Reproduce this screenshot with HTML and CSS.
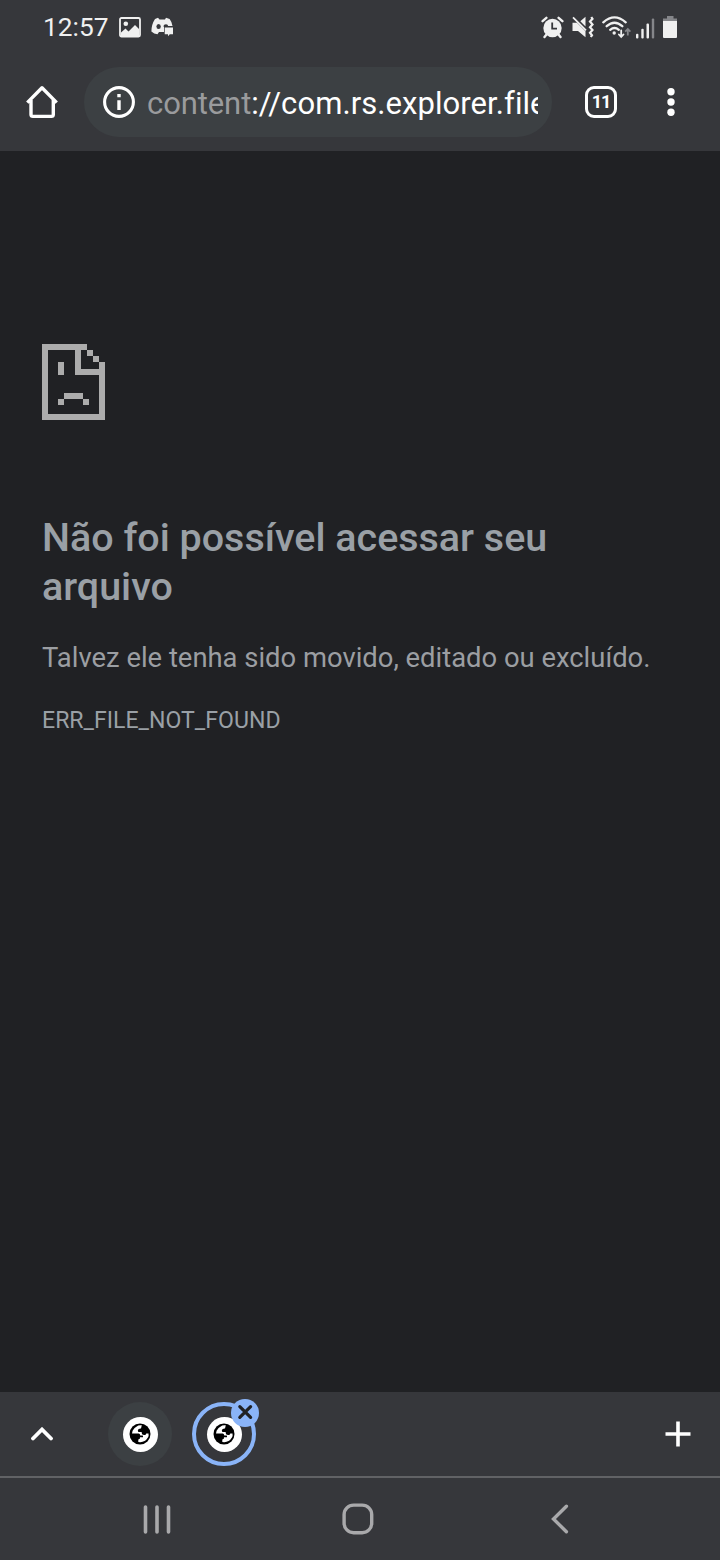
FILE: index.html
```html
<!doctype html>
<html lang="pt-BR">

<head>
    <meta charset="UTF-8" />
    <meta name="viewport" content="width=device-width, initial-scale=1.0" />
    <title>Não foi possível acessar seu arquivo</title>
    <link rel="stylesheet" href="styles.css">
</head>

<body>
    <div class="status-bar">
        <span class="clock">12:57</span>
        <svg class="icon-image" width="22" height="21" viewBox="0 0 22 21">
            <rect x="1" y="1" width="20" height="18.5" rx="1.5" fill="none" stroke="#f0f0f0" stroke-width="1.8" />
            <circle cx="6.8" cy="6.8" r="2.3" fill="#f0f0f0" />
            <path d="M2 15.5 6.5 11.5 9.5 14.5 16 8 20 12V19H2Z" fill="#f0f0f0" />
        </svg>
        <svg class="icon-discord" width="23" height="20" viewBox="0 0 23 20">
            <path d="M7 .8 4 2Q.4 7.5.4 14.5 3 17 6.5 17.2L8 15H13V9H21.5Q21 5 18.6 2L15 .8 14 2.5H8.5Z" fill="#f0f0f0" />
            <ellipse cx="7.6" cy="9.6" rx="2.2" ry="2.5" fill="#36373b" />
            <path d="M12.2 9.5Q12.8 7.2 15 7.2 17 7.2 17.3 9.5Z" fill="#36373b" />
            <path d="M13.7 10.5H22V17.2H18.8L17 19.3V17.2H13.7Z" fill="#f0f0f0" />
        </svg>
        <div class="status-icons">
            <svg width="23" height="23" viewBox="0 0 23 23">
                <g fill="none" stroke="#f0f0f0" stroke-width="2.4" stroke-linecap="round">
                    <path d="M1.6 5.2 5.4 1.8M21.4 5.2 17.6 1.8M5.5 18.5 3.5 21M17.5 18.5 19.5 21" />
                </g>
                <circle cx="11.5" cy="12" r="9.2" fill="#f0f0f0" />
                <path d="M11.2 6.5V12.6H16" fill="none" stroke="#36373b" stroke-width="1.8" />
            </svg>
            <svg class="icon-mute" width="22" height="22" viewBox="0 0 22 22">
                <path d="M.5 6.8H5L13.5 15.2V21.3L6 15H.5ZM8.3 5.3 13.5.8V10.4Z" fill="#f0f0f0" />
                <path d="M1 1.3 14 14.3" stroke="#f0f0f0" stroke-width="1.8" />
                <path d="M19.3 1 20.5 2.8 18 5.6 20.5 8.4 18 11.2 20.5 14 18 16.8 20 19.2 18.8 21" fill="none" stroke="#f0f0f0" stroke-width="2.2" />
            </svg>
            <svg class="icon-wifi" width="29" height="23" viewBox="0 0 29 23">
                <g fill="none" stroke="#f0f0f0" stroke-width="2.3" stroke-linecap="round">
                    <path d="M1.3 6.3Q12.5-3.6 23.7 6.3M4.7 10.2Q12.5 3.3 20.3 10.2M8.2 13.8Q12.5 10.2 16.8 13.8" />
                    <path d="M19.2 14.3V20.7M16.9 18.5 19.2 20.9 21.5 18.5" stroke-width="1.8" />
                </g>
                <circle cx="12.2" cy="17" r="1.7" fill="#f0f0f0" />
                <path d="M25.8 19.5V13.5M23.2 15.7 25.8 13 28.4 15.7" fill="none" stroke="#85868a" stroke-width="1.8" />
            </svg>
            <svg class="icon-signal" width="19" height="21" viewBox="0 0 19 21">
                <g fill="#f0f0f0">
                    <rect y="15.8" width="2.4" height="4.7" rx="1" />
                    <rect x="5.3" y="10.8" width="2.4" height="9.7" rx="1" />
                    <rect x="10.5" y="5.4" width="2.5" height="15.1" rx="1" />
                </g>
                <rect x="15.8" y=".5" width="2.4" height="20" rx="1" fill="#85868a" />
            </svg>
            <svg class="icon-battery" width="14" height="22" viewBox="0 0 14 22">
                <path d="M4 0H10.5V2.5H14V6H0V2.5H4Z" fill="#85868a" />
                <path d="M0 5H14V21Q14 22 13 22H1Q0 22 0 21Z" fill="#f0f0f0" />
            </svg>
        </div>
    </div>

    <div class="toolbar">
        <svg class="home" width="32" height="34" viewBox="0 0 32 34">
            <path d="M1.3 17.6 16 2.8 30.7 17.6M5 15V29.5Q5 31.4 7 31.4H25.4Q27.3 31.4 27.3 29.5V15" fill="none" stroke="#fff" stroke-width="3.4" stroke-linejoin="round" />
        </svg>
        <div class="address">
            <svg class="info" width="32" height="32" viewBox="0 0 32 32">
                <circle cx="16" cy="16" r="14.4" fill="none" stroke="#fff" stroke-width="3.1" />
                <path d="M14.3 8H17.7V11.3H14.3ZM14.3 14.3H17.7V24H14.3Z" fill="#fff" />
            </svg>
            <div class="url"><span class="scheme">content</span>://com.rs.explorer.file</div>
        </div>
        <div class="tab-count">11</div>
        <svg class="menu" width="8" height="28" viewBox="0 0 8 28">
            <g fill="#fff">
                <circle cx="4" cy="3.7" r="3.7" />
                <circle cx="4" cy="14" r="3.7" />
                <circle cx="4" cy="24.3" r="3.7" />
            </g>
        </svg>
    </div>

    <main class="error-page">
        <svg class="sad-file" width="63" height="76" viewBox="0 0 63 76" shape-rendering="crispEdges">
            <g fill="#acacac">
                <path d="M0 0H45V6H38.5V24.5H57V18H63V76H0ZM6 6V70H57V30.5H32.5V6Z" fill-rule="evenodd" />
                <path d="M45 6H51V12H45ZM51 12H57V18H51ZM16 18H22V31H16Z" />
                <path d="M22 49H41V55H22ZM16 55H22V61H16ZM41 55H47V61H41Z" />
            </g>
        </svg>
        <h1>Não foi possível acessar seu arquivo</h1>
        <p class="message">Talvez ele tenha sido movido, editado ou excluído.</p>
        <p class="error-code">ERR_FILE_NOT_FOUND</p>
    </main>

    <div class="tab-strip">
        <svg class="expand" width="22" height="14" viewBox="0 0 22 14">
            <path d="M2 11.5 11 2.5 20 11.5" fill="none" stroke="#fff" stroke-width="3.8" stroke-linecap="round" />
        </svg>
        <div class="tab">
            <div class="favicon">
                <svg width="22" height="22" viewBox="0 0 22 22">
                    <circle cx="11" cy="11" r="10.5" />
                    <path d="M9.2 2.5Q5.8 4.2 3.6 7.7L3 10.5H9.6Q11 10.5 11.3 12.6H13.6Q14.3 12.8 14 14.2H11Q11.5 16 9.3 16.5V19Q15.7 20 18.9 14.5 20 12.5 19.5 10.5H17.3L16.4 12Q13.5 12.3 13 11L12.6 9.1H9.3L8.8 7.3Q9.4 5.3 12 5.5L12.8 2.3Q11 2 9.2 2.5Z" fill="#fff" />
                </svg>
            </div>
        </div>
        <div class="tab tab-active">
            <div class="favicon">
                <svg width="22" height="22" viewBox="0 0 22 22">
                    <circle cx="11" cy="11" r="10.5" />
                    <path d="M9.2 2.5Q5.8 4.2 3.6 7.7L3 10.5H9.6Q11 10.5 11.3 12.6H13.6Q14.3 12.8 14 14.2H11Q11.5 16 9.3 16.5V19Q15.7 20 18.9 14.5 20 12.5 19.5 10.5H17.3L16.4 12Q13.5 12.3 13 11L12.6 9.1H9.3L8.8 7.3Q9.4 5.3 12 5.5L12.8 2.3Q11 2 9.2 2.5Z" fill="#fff" />
                </svg>
            </div>
            <svg class="close" width="28" height="28" viewBox="0 0 28 28">
                <circle cx="14" cy="14" r="14" fill="#8ab4f8" />
                <path d="M8.8 7.6 19.6 18.4M19.6 7.6 8.8 18.4" stroke="#202124" stroke-width="3.2" stroke-linecap="round" />
            </svg>
        </div>
        <svg class="new-tab" width="26" height="26" viewBox="0 0 26 26">
            <path d="M13 .5V25.5M.5 13H25.5" stroke="#fff" stroke-width="3.6" />
        </svg>
    </div>

    <div class="nav-bar">
        <svg class="recents" width="28" height="29" viewBox="0 0 28 29">
            <path d="M2.5 2V27M14 2V27M25.5 2V27" stroke="#a9a9ab" stroke-width="3.6" stroke-linecap="round" />
        </svg>
        <svg class="home-button" width="32" height="32" viewBox="0 0 32 32">
            <rect x="2.1" y="2.1" width="27.6" height="27.6" rx="9.5" fill="none" stroke="#a9a9ab" stroke-width="3.4" />
        </svg>
        <svg class="back" width="18" height="30" viewBox="0 0 18 30">
            <path d="M15.4 2.3 2.5 15 15.4 27.7" fill="none" stroke="#a9a9ab" stroke-width="3.4" stroke-linecap="round" />
        </svg>
    </div>
</body>

</html>
```

FILE: styles.css
```css
body {
    display: flex;
    flex-direction: column;
    height: 1560px;
    margin: 0;
    background-color: #202124;
    font-family: Roboto, sans-serif;
    overflow: hidden;
}

svg {
    display: block;
    flex: none;
}

.status-bar {
    display: flex;
    align-items: center;
    box-sizing: border-box;
    height: 54px;
    padding: 0 43px;
    background-color: #36373b;
    color: #f0f0f0;
}

.clock {
    width: 76px;
    font-size: 26.3px;
    line-height: 54px;
}

.icon-discord {
    margin-left: 10px;
}

.status-icons {
    display: flex;
    align-items: center;
    height: 52px;
    margin-left: auto;
}

.icon-mute {
    margin-left: 8px;
}

.icon-wifi {
    margin-left: 8px;
}

.icon-signal {
    margin: 2px 0 0 5px;
}

.icon-battery {
    margin-left: 8px;
}

.toolbar {
    display: flex;
    align-items: center;
    box-sizing: border-box;
    height: 97px;
    padding: 0 45px 0 26px;
    background-color: #36373b;
}

.home {
    margin-bottom: 2px;
}

.address {
    display: flex;
    align-items: center;
    box-sizing: border-box;
    width: 468px;
    height: 70px;
    margin: 0 33px 1px 26px;
    padding: 0 14px 0 19px;
    border-radius: 35px;
    background-color: #3c4043;
}

.url {
    flex: 1;
    min-width: 0;
    margin-left: 12px;
    padding-top: 4px;
    overflow: hidden;
    color: #fff;
    font-size: 31px;
    letter-spacing: 0.07px;
    line-height: 66px;
    white-space: nowrap;
}

.scheme {
    color: #9a9b9d;
    letter-spacing: -0.1px;
}

.info {
    margin-bottom: 1px;
}

.tab-count {
    box-sizing: border-box;
    width: 32px;
    height: 32px;
    margin-bottom: 1px;
    border: 3.5px solid #fff;
    border-radius: 9px;
    color: #fff;
    font-size: 18px;
    font-weight: 700;
    letter-spacing: -1px;
    line-height: 26px;
    text-align: center;
}

.menu {
    margin: 0 0 1px auto;
}

.error-page {
    flex: 1;
    padding: 193px 42px 0;
    color: #9aa0a6;
}

h1 {
    margin: 93px 0 0;
    font-size: 39.45px;
    font-weight: 500;
    line-height: 49px;
}

.message {
    margin: 26px 0 0;
    color: #9b9ea2;
    font-size: 27.4px;
    line-height: 42px;
    white-space: nowrap;
}

.error-code {
    margin: 25px 0 0;
    font-size: 23.1px;
    line-height: 34px;
}

.tab-strip {
    display: flex;
    align-items: center;
    height: 84px;
    padding: 0 29px 0 31px;
    border-bottom: 2px solid #616265;
    background-color: #36373b;
}

.tab {
    display: flex;
    align-items: center;
    justify-content: center;
    position: relative;
    box-sizing: border-box;
    width: 64px;
    height: 64px;
    margin-left: 20px;
    border-radius: 50%;
    background-color: #3c4043;
}

.expand + .tab {
    margin-left: 55px;
}

.tab-active {
    border: 4px solid #8ab4f8;
    background-color: transparent;
}

.favicon {
    display: flex;
    align-items: center;
    justify-content: center;
    width: 35px;
    height: 35px;
    border-radius: 50%;
    background-color: #fff;
}

.close {
    position: absolute;
    top: -7px;
    right: -7px;
}

.new-tab {
    margin-left: auto;
}

.nav-bar {
    display: flex;
    align-items: center;
    box-sizing: border-box;
    height: 82px;
    padding: 0 151px 0 143px;
    background-color: #36373b;
}

.home-button {
    margin-left: 171px;
}

.back {
    margin-left: auto;
}
```
